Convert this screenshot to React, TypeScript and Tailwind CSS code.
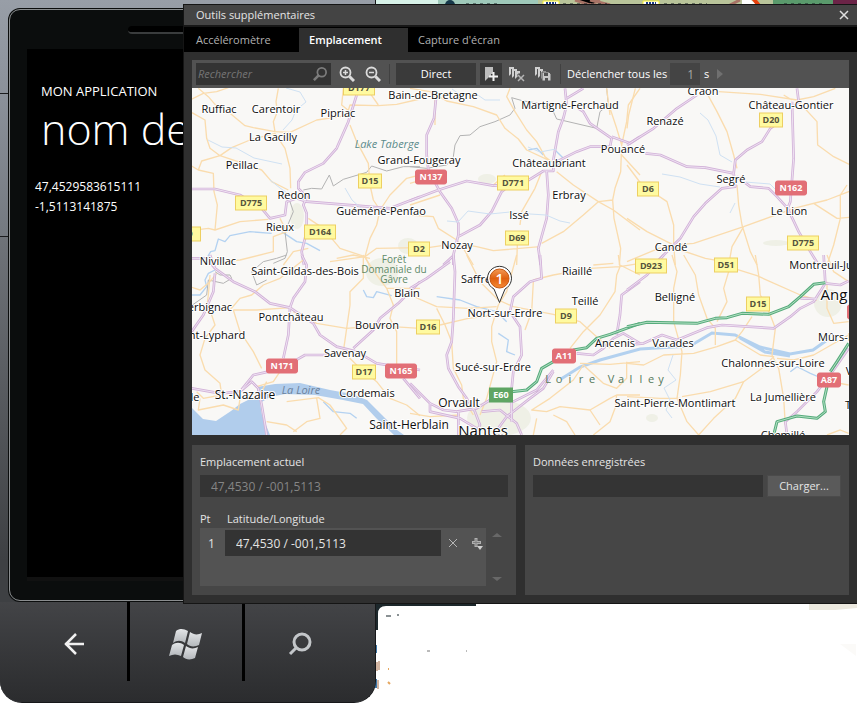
import { useState } from "react";
import type { ReactNode } from "react";

/* ---------- Map data ---------- */

type Tile = {
  x: number;
  y: number;
  minor: string;
  major: string;
  motorway?: string;
  water: string;
  border?: string;
};

/* Each tile is drawn on a 690 x 570 grid, three units to a pixel. */
const tiles: Tile[] = [
  {
    x: 190,
    y: 85,
    minor:
      "M0 45L40 25L80 20L115 8M25 10L55 35L75 58L120 85L165 122L190 128L255 140M265 10L258 50L262 80L250 110L255 140M255 140L300 142L380 105L470 92L480 60L565 62L620 58L690 42M530 10L565 60M6 83L45 105L50 160L60 190L90 212M255 145L180 165L125 188L90 212L35 228L25 255L0 240M90 212L160 235L215 255L245 290L295 315M255 145L285 190L300 250L302 310M25 255L70 265L72 320L82 360L75 435M0 437L55 430L75 435L150 410L235 403M480 120L500 170L535 235L540 300L550 345L570 375M570 375L600 330L650 280L690 270M570 375L560 420L540 460L525 515M525 515L560 490L690 488M525 515L450 490L400 430L355 400M270 400L290 440L250 455L250 500L150 525L100 530M460 10L455 60L480 80M355 490L310 500L280 540M525 515L540 545M525 515L420 530",
    major:
      "M500 30L475 110L440 190L400 235L345 262L325 290L325 310L350 335L340 360L350 385L350 440L335 500L342 540M6 312L75 312L150 330L215 370L240 400L285 390L290 350L320 340L350 350L500 362L600 370L690 335",
    water:
      "M50 520L62 500L75 497L85 462L105 470L120 452L180 440L245 445M275 440L320 470L350 475L390 497",
    border:
      "M340 315L365 310L395 312L418 270L430 303L460 283L530 262L545 243L590 258L640 245L690 245M300 350L310 380L285 440L292 500L285 520L250 535",
  },
  {
    x: 410,
    y: 85,
    minor:
      "M300 10L290 35L315 80L350 135L380 170L405 215L425 230M0 10L60 20L110 48L190 65L260 90L285 130L325 162L350 195L425 230M75 30L75 120M600 90L590 10M600 70L620 130L635 180L632 260L615 310L608 345L612 400L632 490L628 540M690 10L655 60L650 110L635 180M635 210L690 270M440 260L490 300L565 350L610 375L690 435M608 345L565 350L520 390L460 440L395 475M330 420L335 380L375 310L395 260M0 390L70 395L85 430L140 465L160 490L190 540M40 490L140 475L200 485L250 497L390 485M322 480L320 540M0 360L90 330M0 295L50 280M250 300L285 270M550 540L610 535",
    major:
      "M78 40L72 100L50 150L50 210L55 255L90 320L125 370L145 415L145 450L130 510L130 540M0 347L85 315L170 288L250 302L340 295L400 258L430 258L430 225L445 140L460 100L470 60L465 10M410 258L415 330L410 400L385 490L392 540M145 455L210 420L245 380L275 320L320 285M440 230L500 200L540 185L600 185L605 160L540 115L520 80L505 70M605 155L660 175L690 155M520 10L470 40M130 512L100 540",
    water:
      "M355 195L380 190L400 210M435 195L460 220L445 240",
    border:
      "M0 245L50 250L110 240L130 215L135 180L150 152L180 150L210 125L255 110L300 90L315 70L305 38L340 48L390 55L430 80L440 102L560 130L570 80L595 60L590 10",
  },
  {
    x: 627,
    y: 85,
    minor:
      "M25 10L5 90L0 130M0 240L45 300L120 350L140 420L140 475M240 25L270 80L300 140L320 210L330 250M275 20L400 28L510 45L560 35L625 10M510 45L570 110L572 180L620 215L690 250M330 300L335 360L345 420L370 500L390 540M690 310L600 345L500 370L350 425L200 475L140 480M0 400L60 440L130 475L160 495L235 520L290 530M560 355L630 400L690 395M660 300L640 330L640 400L620 480L600 540M140 480L95 490L0 530M140 480L145 540M350 425L315 485L305 540M495 45L470 30",
    major:
      "M495 50L500 220L490 350L482 370M0 180L80 130L150 70L210 30M55 205L100 210L180 245L235 248L320 265L325 225L360 195L405 170L430 130L450 115M320 265L325 305L285 310L235 355L200 395L160 460L140 480L95 525M330 275L370 305L425 310L450 335L482 370L515 440L550 500L575 540M510 10L515 50L495 70",
    water: "",
  },
  {
    x: 190,
    y: 255,
    minor:
      "M0 95L30 105L60 80L80 55M60 60L55 120L50 160M60 165L75 210L45 250L30 300L45 345L90 385L95 420L40 430L20 410M120 165L150 130L185 120L220 90L270 70L340 15M130 165L200 165L300 158M130 165L150 230L190 290L215 340M310 170L380 205L470 220L560 212L690 220M520 0L520 70L480 110L480 150L470 220L460 290M520 0L560 60L590 100L610 150L600 190L620 230L620 330M590 100L690 100M460 290L500 330L560 380L600 430L650 450L690 482M380 430L390 490L350 500L310 530M290 440L385 428L420 450L470 520L450 540M230 500L290 510L320 530M30 430L25 465L100 450L145 465L150 430L215 410L230 380M270 350L250 380L200 395M440 10L490 0L540 10",
    major:
      "M60 0L75 40L130 80L195 110L240 145L300 158L370 205L390 240L440 275L500 290L560 325L690 345M335 0L350 30L345 80L310 130L300 158L295 240L280 310M75 55L70 110L40 180L5 230M690 80L625 145L570 190L550 225L490 280M420 300L345 300L310 320M235 350L190 360L150 410L90 415L5 400M150 410L185 380L205 400L215 450L230 540M640 370L690 430M0 10L50 10L75 40",
    water:
      "M520 105L530 125L550 128L560 110L605 122M75 45L55 55L45 75L50 95L30 120L0 120M400 440L430 470L480 475L500 490",
    border: "M290 0L260 10L220 20L185 50L200 90L230 75M75 50L90 60L120 60L125 70L100 85L55 75L50 120L0 155",
  },
  {
    x: 410,
    y: 255,
    minor:
      "M170 0L210 80L265 135L310 155L430 178L510 200L560 245L600 280M320 0L290 110L265 150L245 215L245 260L260 320L230 430L210 480M0 120L80 155L175 160L260 155M90 210L175 190L260 180M80 160L105 210L125 260L130 340L155 390L160 430L190 480M370 80L365 170L345 225M370 75L430 60L540 40L630 35L690 25M630 35L620 60L615 110L570 180L520 230L480 280M510 325L600 328L690 320M520 330L490 375L420 430L365 465L410 470L450 455L540 465L600 430L620 420L690 420M620 420L615 460L600 500L550 540M540 465L570 510M380 490L370 540M430 480L470 500L495 540M630 35L625 0M630 30L690 60M0 475L60 485L150 480M520 330L580 385L620 400L650 370L650 320",
    major:
      "M130 0L135 50L130 190L125 260L110 300L115 340L145 395L170 430L195 470L210 510L195 540M0 100L50 70L120 20M390 0L395 70L360 80L310 125L300 170L330 215L335 300L310 350L305 400L305 500M0 385L60 445L100 465L140 470L200 460L240 435L310 440L380 405L430 345M215 470L270 465L320 505L335 540M250 540L290 485L360 430L400 400L430 350M500 295L550 300L580 280L610 250L640 235L690 265M690 80L635 120L630 180L620 240M145 470L145 540M60 445L60 470L150 490L200 520",
    motorway: "M305 410L350 405L380 380L395 340L430 320M490 285L530 278L560 250L600 238L690 205",
    water:
      "M80 125L150 135L200 155L260 170L290 200M265 235L295 255L290 290L315 300",
  },
  {
    x: 627,
    y: 255,
    minor:
      "M135 0L150 50L140 100L140 200L165 290L160 360L150 430L180 500L215 540M170 0L205 60L215 120L240 190L265 220L265 270M305 50L290 100L300 140L270 200M320 40L390 62L520 120L570 135M385 0L395 60L400 120L430 180L445 220L435 300L455 340L470 430L475 510M375 185L345 230L325 255L350 270L400 300L440 305L405 340L350 380L250 410L165 425M0 325L50 330L110 300L200 295L270 275L325 255M350 380L325 430L260 490L215 540M600 80L600 160L620 205L665 200M0 425L100 430L160 430M600 0L620 50L665 80M450 310L500 315L560 300L665 240M600 540L640 525L665 535M665 390L610 380",
    major:
      "M0 105L60 60L110 0M5 270L50 265L105 240L150 255L240 218L285 210L440 220L490 185L520 160L560 140L595 85L590 0M665 280L620 345L570 410L510 470L475 500L480 540M595 85L640 90L665 78M520 130L570 132",
    motorway:
      "M0 215L60 202L210 205L265 190L300 188L345 175L425 178L485 155L520 125L560 88L595 83M665 265L630 320L610 350M600 395L590 440L595 470L570 490L510 483L450 500L440 540",
    water: "M490 350L510 335L530 345L550 355L590 372",
  },
];

const townLabels: [string, number, number, number?][] = [
  ["Ruffiac", 219, 113],
  ["Carentoir", 276, 113],
  ["Pipriac", 338, 117],
  ["La Gacilly", 273, 141],
  ["Peillac", 242, 169],
  ["Redon", 294, 199],
  ["Rieux", 280, 231],
  ["Nivillac", 218, 265],
  ["Bain-de-Bretagne", 433, 99],
  ["Grand-Fougeray", 419, 164],
  ["Guéméné-Penfao", 381, 215],
  ["Martigné-Ferchaud", 570, 109],
  ["Châteaubriant", 549, 167],
  ["Pouancé", 623, 153],
  ["Renazé", 665, 125],
  ["Craon", 703, 95],
  ["Château-Gontier", 791, 109],
  ["Erbray", 569, 199],
  ["Issé", 519, 219],
  ["Segré", 731, 183],
  ["Le Lion", 789, 215],
  ["Nozay", 457, 249],
  ["Candé", 671, 251],
  ["Montreuil-Ju", 821, 269],
  ["Saint-Gildas-des-Bois", 305, 275],
  ["Blain", 407, 297],
  ["Saffré", 476, 283],
  ["Riaillé", 577, 275],
  ["Belligné", 675, 301],
  ["Teillé", 585, 305],
  ["erbignac", 210, 311],
  ["Pontchâteau", 291, 321],
  ["Bouvron", 377, 329],
  ["Nort-sur-Erdre", 505, 317],
  ["nt-Lyphard", 217, 339],
  ["Savenay", 345, 357],
  ["Ancenis", 615, 347],
  ["Varades", 673, 347],
  ["Mûrs-E", 836, 341],
  ["Sucé-sur-Erdre", 493, 371],
  ["Chalonnes-sur-Loire", 773, 367],
  ["Cordemais", 367, 397],
  ["le", 195, 401],
  ["Saint-Pierre-Montlimart", 675, 407],
  ["La Jumellière", 783, 401],
  ["Chemillé", 783, 439],
  ["St.-Nazaire", 245, 399, 12],
  ["Saint-Herblain", 409, 429, 12],
  ["Orvault", 459, 407, 12],
  ["Nantes", 483, 436, 15],
  ["Ang", 834, 300, 15],
  ["V", 849, 375],
  ["T", 848, 409],
];

const roadShields: [string, number, number, string][] = [
  ["D177", 359, 88, "d"],
  ["D15", 370, 181, "d"],
  ["D775", 251, 203, "d"],
  ["D164", 320, 232, "d"],
  ["9", 190, 234, "d"],
  ["D771", 513, 183, "d"],
  ["D69", 517, 238, "d"],
  ["D2", 419, 249, "d"],
  ["D20", 771, 120, "d"],
  ["D6", 648, 189, "d"],
  ["D775", 803, 243, "d"],
  ["D923", 651, 266, "d"],
  ["D51", 726, 265, "d"],
  ["D15", 758, 304, "d"],
  ["D9", 566, 316, "d"],
  ["D16", 428, 327, "d"],
  ["D17", 364, 372, "d"],
  ["N137", 431, 177, "n"],
  ["N162", 791, 188, "n"],
  ["N171", 282, 366, "n"],
  ["N165", 401, 371, "n"],
  ["A11", 564, 356, "n"],
  ["A87", 829, 380, "n"],
  ["", 858, 312, "n"],
  ["E60", 501, 395, "e"],
];

function Shield({ text, x, y, kind }: { text: string; x: number; y: number; kind: string }) {
  const width = text.length > 3 ? 31 : text.length > 2 ? 23 : 21;
  const fill = kind === "d" ? "#fffaa0" : kind === "n" ? "#e26f76" : "#5fa563";
  return (
    <g>
      <rect
        x={x - width / 2}
        y={y - 7}
        width={width}
        height={14}
        rx={kind === "n" ? 2 : 0}
        fill={fill}
        stroke={kind === "d" ? "#edcf62" : fill}
      />
      <text x={x} y={y + 3} textAnchor="middle" fontSize={9} fontWeight={700} fill={kind === "d" ? "#55533c" : "#ffffff"}>
        {text}
      </text>
    </g>
  );
}

function MapView() {
  return (
    <svg
      className="block h-[347px] w-full bg-[#f9f8f6]"
      viewBox="192 88 657 347"
      preserveAspectRatio="xMinYMin slice"
      fontFamily="'Open Sans', 'Noto Sans', sans-serif"
      role="img"
      aria-label="Carte"
    >
      <g fill="#eff0e6">
        <ellipse cx={487} cy={179} rx={9} ry={5} />
        <ellipse cx={408} cy={246} rx={10} ry={8} />
        <ellipse cx={776} cy={243} rx={13} ry={3} />
        <ellipse cx={499} cy={418} rx={32} ry={18} />
        <ellipse cx={828} cy={303} rx={14} ry={14} />
        <ellipse cx={382} cy={272} rx={16} ry={14} />
        <ellipse cx={297} cy={216} rx={7} ry={13} />
        <ellipse cx={652} cy={418} rx={6} ry={4} />
      </g>
      <path
        d="M192 408L203 419L216 421L231 411L240 404L252 398L257 397L257 387L275 384L300 383L330 390L352 394L367 400L382 415L397 430L404 435L394 435L376 418L363 404L343 400L315 395L285 394L270 397L260 403L262 415L270 435L192 435Z"
        fill="#b1cdec"
      />
      <path d="M561 379L580 367L600 360L640 349L690 346L712 333L735 335L760 347L790 354L813 350L830 338M740 338L765 352L790 356" fill="none" stroke="#b3d1ef" strokeWidth={3} />
      {tiles.map((tile) => (
        <g key={`${tile.x}-${tile.y}`} transform={`translate(${tile.x} ${tile.y}) scale(0.33333)`} fill="none" strokeLinejoin="round">
          <path d={tile.water} stroke="#b4d2f1" strokeWidth={4} />
          {tile.border && <path d={tile.border} stroke="#b3b3b3" strokeWidth={3} />}
          <path d={tile.minor} stroke="#fadcae" strokeWidth={4} />
          <path d={tile.major} stroke="#d2b2d8" strokeWidth={8} />
          <path d={tile.major} stroke="#eee2f2" strokeWidth={3} />
          {tile.motorway && <path d={tile.motorway} stroke="#56ab7b" strokeWidth={9} />}
          {tile.motorway && <path d={tile.motorway} stroke="#b4dfc4" strokeWidth={3} />}
        </g>
      ))}
      <g fill="none" stroke="#cfe1f3" strokeWidth={1}>
        <path d="M286 88L300 92L306 102L296 110L292 120L283 130M208 140L222 147L236 148L254 158L282 164M270 180L280 188L290 195M345 188L352 200L362 209" />
        <path d="M452 89L462 96L475 93L485 100L500 100M447 221L458 222L468 211L490 214L510 212L530 214L546 215L560 221L570 223M528 147L540 152L556 149" />
        <path d="M700 113L708 120L716 136L720 155L732 162M662 174L680 177L700 184L720 187M735 203L730 213M745 182L770 184L778 192" />
        <path d="M673 355L668 370L676 380L664 388L670 400L666 410L672 418" />
      </g>
      {roadShields.map(([text, x, y, kind], index) => (
        <Shield key={index} text={text} x={x} y={y} kind={kind} />
      ))}
      <g textAnchor="middle" fontSize={10} fill="#5f8a68">
        <text x={394} y={263}>Forêt</text>
        <text x={394} y={273}>Domaniale du</text>
        <text x={394} y={283}>Gâvre</text>
      </g>
      <g fontStyle="italic" fontSize={11}>
        <text x={387} y={148} textAnchor="middle" fill="#5b8b8b">Lake Taberge</text>
        <text x={301} y={394} textAnchor="middle" fill="#6b829c">La Loire</text>
      </g>
      <g fontSize={11} fill="#55795c" textAnchor="middle">
        {[..."Loire"].map((letter, i) => (
          <text key={i} x={548 + i * 11} y={383}>{letter}</text>
        ))}
        {[..."Valley"].map((letter, i) => (
          <text key={i} x={611 + i * 10} y={383}>{letter}</text>
        ))}
      </g>
      <g textAnchor="middle" fill="#0d0d0d" stroke="#ffffff" strokeWidth={2} strokeLinejoin="round" paintOrder="stroke">
        {townLabels.map(([text, x, y, size]) => (
          <text key={`${text}-${x}`} x={x} y={y} fontSize={size ?? 11}>{text}</text>
        ))}
      </g>
      <defs>
        <linearGradient id="pin" x1="0" y1="0" x2="0" y2="1">
          <stop offset="0" stopColor="#f39a55" />
          <stop offset="0.5" stopColor="#e0600f" />
          <stop offset="1" stopColor="#f58a35" />
        </linearGradient>
      </defs>
      <path d="M499.500 302.500L494 289A12 12 0 1 1 505 289Z" fill="#ffffff" stroke="#333333" />
      <circle cx={499.500} cy={278.500} r={9.500} fill="url(#pin)" stroke="#c65710" />
      <text x={499.500} y={284} textAnchor="middle" fontSize={14} fontWeight={600} fill="#ffffff">1</text>
    </svg>
  );
}

/* ---------- Icons ---------- */

function SearchIcon({ className }: { className: string }) {
  return (
    <svg className={className} viewBox="0 0 16 16" fill="none" stroke="currentColor" aria-hidden="true">
      <circle cx={10} cy={6} r={5} strokeWidth={2} />
      <path d="M7 9L1 15" strokeWidth={3} />
    </svg>
  );
}

function ZoomIcon({ plus }: { plus?: boolean }) {
  return (
    <svg className="size-4" viewBox="0 0 16 16" fill="none" stroke="#dcdcdc" aria-hidden="true">
      <circle cx={6.500} cy={6.500} r={5} strokeWidth={1.800} />
      <path d="M10.500 10.500L15 15" strokeWidth={3} />
      <path d={plus ? "M4 6.500H9M6.500 4V9" : "M4 6.500H9"} strokeWidth={1.500} />
    </svg>
  );
}

function AddPointIcon() {
  return (
    <svg className="h-4 w-4" viewBox="0 0 16 16" aria-hidden="true">
      <path d="M2 1H10V8H8V11H6L2 15Z" fill="#bdbdbd" />
      <path d="M10.500 6V15M6 10.500H15" stroke="#f2f2f2" strokeWidth={2} />
    </svg>
  );
}

function PointsIcon({ children }: { children: ReactNode }) {
  return (
    <svg className="h-4 w-4" viewBox="0 0 16 16" aria-hidden="true">
      <path d="M0 1H5V3H2V8L0 10ZM3 3H8V5H5V10L3 12ZM6 5H11V8L6 13Z" fill="#d0d0d0" />
      {children}
    </svg>
  );
}

function WindowsFlag() {
  return (
    <svg className="h-8 w-9" viewBox="0 0 36 32" fill="url(#flag)" aria-hidden="true">
      <defs>
        <linearGradient id="flag" x1="0" y1="0" x2="0" y2="1">
          <stop offset="0" stopColor="#e3e5e7" />
          <stop offset="1" stopColor="#b4b8bc" />
        </linearGradient>
      </defs>
      <path d="M8 3C12 0 16 1 20 3L17 15C13 12 9 12 5 15Z" />
      <path d="M22 4C26 7 30 7 34 5L31 17C27 19 22 19 19 16Z" />
      <path d="M4 17C8 14 12 14 16 17L13 28C9 26 5 26 1 28Z" />
      <path d="M18 18C22 21 26 21 30 19L27 30C23 32 18 32 15 29Z" />
    </svg>
  );
}

/* ---------- Background and phone ---------- */

function Backdrop() {
  return (
    <svg className="absolute inset-0 h-[703px] w-full" viewBox="0 0 857 703" preserveAspectRatio="xMinYMin slice" aria-hidden="true">
      <rect width={857} height={703} fill="#ffffff" />
      <rect x={370} width={68} height={5} fill="#d8f2e9" />
      <rect x={438} width={100} height={5} fill="#9fc9ba" />
      <rect x={538} width={235} height={5} fill="#b9c49a" />
      <rect x={773} width={60} height={5} fill="#5a9a6c" />
      <rect x={833} width={24} height={5} fill="#6b2447" />
      <circle cx={450} cy={5} r={5} fill="#16384a" />
      <path d="M575 0L590 5L600 0M590 0L610 5M730 5L740 0" stroke="#a87366" strokeWidth={3} />
      <path d="M543 1H559V5H543ZM643 1H659V5H643Z" fill="#ffffff" stroke="#f4ee2d" />
      <path d="M546 3H556M646 3H656" stroke="#1b3c8c" strokeWidth={2} strokeDasharray="2 1" />
      <path d="M466 4H500M563 4H607M664 4H707M784 4H822" stroke="#172024" strokeWidth={1} strokeDasharray="3 4" />
      <path d="M742 5V0H751L757 5" fill="#ffffff" />
      <path d="M752 0H757L761 5H756Z" fill="#e8400c" />
      <path d="M370 603H476V606H386Q378 606 378 614V630H370V603Z" fill="#1d282c" />
      <path d="M386 616H391M397 615H399" stroke="#8a9194" strokeWidth={2} />
      <path d="M427 651H430M466 651H467" stroke="#777777" />
      <path d="M376 645V653M376 679V688" stroke="#3d77a8" strokeWidth={2} />
      <path d="M377 662V671M379 661V670M378 680V689" stroke="#a56a45" />
      <path d="M388 682L390 684M388 669H389" stroke="#e5a760" strokeWidth={2} />
      <path d="M809 604H857V608L835 610H809Z" fill="#ece9df" />
      <path d="M840 644L856 656V644Z" fill="#fbfaf8" />
    </svg>
  );
}

function Phone() {
  return (
    <section
      aria-label="Téléphone"
      className="absolute top-0 left-0 flex h-[703px] w-[376px] flex-col overflow-hidden rounded-b-[22px] border-r border-b border-[#17181a] bg-[linear-gradient(#989ea7,#8b919a_93px,#1b1c1e_93px,#1b1c1e_94px,#8b919a_94px,#747980_236px,#1b1c1e_236px,#1b1c1e_237px,#6f7379_237px,#3e4043_560px)] pt-2 pl-2"
    >
      <div className="h-[594px] shrink-0 rounded-xl rounded-r-none border-2 border-[#0b0d0d] bg-[#0b0d0d] outline-1 -outline-offset-2 outline-[#8a8d8f]">
        <div className="flex h-[39px] items-start pt-4 pl-[118px]">
          <div className="h-2 w-full rounded-full border-b-2 border-[#3a3c3d] bg-black" />
        </div>
        <div className="ml-[17px] flex h-[532px] flex-col border-b-4 border-[#111111] bg-black pt-8 text-white">
          <p className="pl-[14px] font-['Open_Sans'] text-[13px] leading-5">MON APPLICATION</p>
          <h1 className="pl-[14px] font-['Open_Sans'] text-[43px] leading-[56px] font-light whitespace-nowrap">nom de</h1>
          <p className="mt-5 pl-2 font-['Open_Sans'] text-[12px] leading-5">
            47,4529583615111
            <br />
            -1,5113141875
          </p>
        </div>
      </div>
      <div className="-ml-2 flex flex-1 items-start bg-linear-to-b from-[#434447] to-[#2b2c2e]">
        <button aria-label="Retour" className="flex h-[79px] w-[130px] items-center justify-center border-r-[3px] border-black pt-1 pl-5">
          <svg className="h-6 w-6" viewBox="0 0 24 24" fill="none" stroke="#f0f0f0" strokeWidth={2.500} aria-hidden="true">
            <path d="M22 12H3M14 2L4 12L14 22" />
          </svg>
        </button>
        <button aria-label="Démarrer" className="flex h-[79px] w-[115px] items-center justify-center border-r-[3px] border-black pt-1">
          <WindowsFlag />
        </button>
        <button aria-label="Rechercher" className="flex h-[79px] flex-1 items-center justify-center pt-1 pr-5 text-[#c3c6c9]">
          <svg className="h-6 w-6" viewBox="0 0 24 24" fill="none" stroke="currentColor" aria-hidden="true">
            <circle cx={14} cy={10} r={8} strokeWidth={3} />
            <path d="M8 16L2 22" strokeWidth={3} />
          </svg>
        </button>
      </div>
    </section>
  );
}

/* ---------- Tools window ---------- */

const tabs = ["Accéléromètre", "Emplacement", "Capture d'écran"];

function ToolsWindow() {
  const [tab, setTab] = useState("Emplacement");
  return (
    <section
      aria-label="Outils supplémentaires"
      className="absolute top-1 right-0 left-[183px] border border-r-0 border-[#151515] bg-[#2f2f2f] font-['Open_Sans','Noto_Sans',sans-serif] text-[11px] text-[#e4e4e4]"
    >
      <header className="flex h-5 items-center justify-between bg-[#444444] pr-2 pl-3">
        <h2>Outils supplémentaires</h2>
        <button aria-label="Fermer" className="text-[#e0e0e0]">
          <svg className="size-[10px]" viewBox="0 0 10 10" stroke="currentColor" strokeWidth={1.500} aria-hidden="true">
            <path d="M1 1L9 9M9 1L1 9" />
          </svg>
        </button>
      </header>
      <div role="tablist" className="flex h-[27px] border-t-2 border-[#171717] bg-black pt-px">
        {tabs.map((name) => (
          <button
            key={name}
            role="tab"
            aria-selected={tab === name}
            onClick={() => setTab(name)}
            className={
              tab === name
                ? "w-[109px] bg-[#2f2f2f] pl-[10px] text-left font-semibold text-white"
                : "w-[115px] pl-3 text-left text-[#b0b0b0] last:pl-[10px]"
            }
          >
            {name}
          </button>
        ))}
      </div>
      <div className="p-2">
        <div className="flex h-7 items-center bg-[#525252] pl-1">
          <label className="flex h-[22px] w-[135px] items-center bg-[#333333] pr-1 pl-[2px] text-[#7c7c7c]">
            <input
              type="search"
              aria-label="Rechercher"
              placeholder="Rechercher"
              className="min-w-0 flex-1 bg-transparent italic outline-none placeholder:text-[#757575]"
            />
            <SearchIcon className="h-[14px] w-[14px]" />
          </label>
          <button aria-label="Zoom avant" className="ml-2"><ZoomIcon plus /></button>
          <button aria-label="Zoom arrière" className="ml-[10px]"><ZoomIcon /></button>
          <div className="ml-2 h-5 w-px bg-[#414141]" />
          <button className="ml-[6px] h-[22px] w-20 bg-[#3a3a3a] text-white">Direct</button>
          <button aria-label="Ajouter un point" className="ml-1 flex h-[22px] w-[22px] items-center justify-center bg-[#3a3a3a]">
            <AddPointIcon />
          </button>
          <button aria-label="Supprimer les points" className="ml-[7px]">
            <PointsIcon><path d="M9 8L15 15M15 8L9 15" stroke="#525252" strokeWidth={3} /><path d="M9 9L15 15M15 9L9 15" stroke="#b5b5b5" strokeWidth={1.500} /></PointsIcon>
          </button>
          <button aria-label="Enregistrer les points" className="ml-[10px]">
            <PointsIcon>
              <path d="M7 6H14L16 8V15H7Z" fill="#c9c9c9" stroke="#525252" />
              <path d="M9 7H13V10H9ZM10 12H13V15H10Z" fill="#525252" />
            </PointsIcon>
          </button>
          <div className="ml-[9px] h-5 w-px bg-[#414141]" />
          <label htmlFor="delay" className="ml-[6px] w-[103px] whitespace-nowrap text-white">Déclencher tous les</label>
          <input id="delay" defaultValue="1" className="h-[22px] w-[30px] bg-[#444444] pr-[6px] text-right text-[12px] text-[#a6a6a6] outline-none" />
          <span className="ml-1 text-white">s</span>
          <button aria-label="Lecture" className="ml-2">
            <svg className="h-[10px] w-[6px]" viewBox="0 0 6 10" fill="#707070" aria-hidden="true"><path d="M0 0L6 5L0 10Z" /></svg>
          </button>
        </div>
        <MapView />
        <div className="mt-[10px] flex h-[150px] gap-[9px]">
          <div className="flex w-[324px] flex-col bg-[#464646] pt-2 pl-2">
            <label htmlFor="current" className="leading-[18px]">Emplacement actuel</label>
            <input
              id="current"
              readOnly
              value="47,4530 / -001,5113"
              className="mt-1 h-[22px] w-[308px] bg-[#343434] pl-[11px] text-[12px] text-[#858585] outline-none"
            />
            <div className="mt-3 flex">
              <table className="w-[286px] table-fixed border-collapse">
                <thead>
                  <tr className="h-[19px] text-left leading-[18px]">
                    <th className="w-[25px] p-0 font-normal">Pt</th>
                    <th className="p-0 pl-[2px] font-normal">Latitude/Longitude</th>
                    <th className="w-[45px] p-0" aria-label="Actions" />
                  </tr>
                </thead>
                <tbody>
                  <tr className="h-[58px] bg-[#535353] align-top">
                    <td className="p-0 pt-[6px] pl-2 text-[12px] leading-5">1</td>
                    <td className="p-0 pt-[2px]">
                      <input
                        aria-label="Latitude/Longitude du point 1"
                        defaultValue="47,4530 / -001,5113"
                        className="block h-[26px] w-full bg-[#333333] pl-[11px] text-[12px] text-[#e4e4e4] outline-none"
                      />
                    </td>
                    <td className="p-0 pt-[2px]">
                      <div className="flex h-[26px] items-center gap-[14px] pl-2">
                        <button aria-label="Supprimer">
                          <svg className="size-2" viewBox="0 0 8 8" stroke="#b5b5b5" aria-hidden="true"><path d="M0 0L8 8M8 0L0 8" /></svg>
                        </button>
                        <button aria-label="Ajouter">
                          <svg className="h-[14px] w-3" viewBox="0 0 12 14" aria-hidden="true">
                            <path d="M5 2V11M1 6.500H10" stroke="#b0b0b0" strokeWidth={3} />
                            <path d="M2 6.500H9M5 3V10" stroke="#808080" />
                            <path d="M6 10H12L9 14Z" fill="#cfcfcf" />
                          </svg>
                        </button>
                      </div>
                    </td>
                  </tr>
                </tbody>
              </table>
              <div className="mt-6 flex h-12 flex-col justify-between pl-[6px]">
                <button aria-label="Monter">
                  <svg className="block h-1 w-[10px]" viewBox="0 0 10 4" fill="#686868" aria-hidden="true"><path d="M0 4L5 0L10 4Z" /></svg>
                </button>
                <button aria-label="Descendre">
                  <svg className="block h-1 w-[10px]" viewBox="0 0 10 4" fill="#686868" aria-hidden="true"><path d="M0 0L5 4L10 0Z" /></svg>
                </button>
              </div>
            </div>
          </div>
          <div className="flex flex-1 flex-col bg-[#464646] px-2 pt-2">
            <label htmlFor="recorded" className="leading-[18px]">Données enregistrées</label>
            <div className="mt-1 flex gap-1">
              <input id="recorded" className="h-[22px] min-w-0 flex-1 bg-[#343434] px-2 outline-none" />
              <button className="h-[22px] w-[74px] border border-[#4b4b4b] bg-[#5a5a5a]">Charger...</button>
            </div>
          </div>
        </div>
      </div>
    </section>
  );
}

export default function App() {
  return (
    <main className="relative h-[703px] w-full overflow-hidden bg-white">
      <Backdrop />
      <Phone />
      <ToolsWindow />
    </main>
  );
}
